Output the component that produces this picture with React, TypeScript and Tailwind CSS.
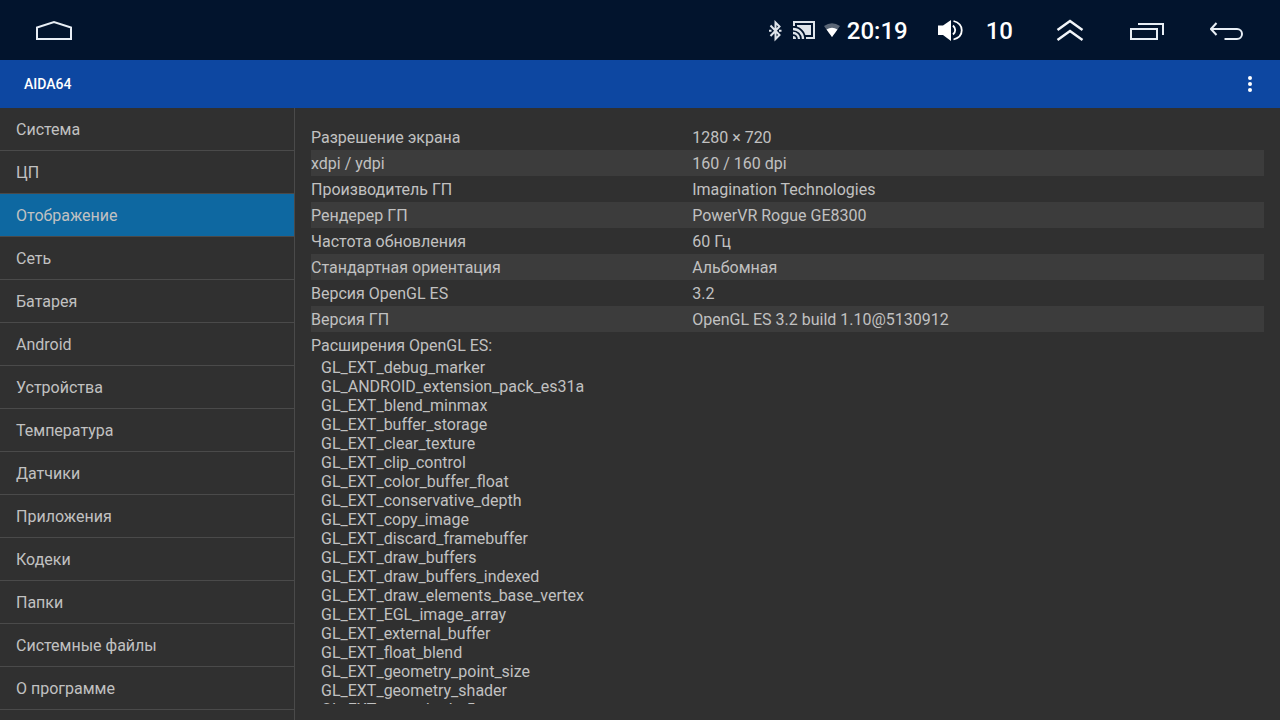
import type { ReactNode } from "react"

const sections = [
  "Система",
  "ЦП",
  "Отображение",
  "Сеть",
  "Батарея",
  "Android",
  "Устройства",
  "Температура",
  "Датчики",
  "Приложения",
  "Кодеки",
  "Папки",
  "Системные файлы",
  "О программе",
]

const rows = [
  ["Разрешение экрана", "1280 × 720"],
  ["xdpi / ydpi", "160 / 160 dpi"],
  ["Производитель ГП", "Imagination Technologies"],
  ["Рендерер ГП", "PowerVR Rogue GE8300"],
  ["Частота обновления", "60 Гц"],
  ["Стандартная ориентация", "Альбомная"],
  ["Версия OpenGL ES", "3.2"],
  ["Версия ГП", "OpenGL ES 3.2 build 1.10@5130912"],
]

const extensions = [
  "GL_EXT_debug_marker",
  "GL_ANDROID_extension_pack_es31a",
  "GL_EXT_blend_minmax",
  "GL_EXT_buffer_storage",
  "GL_EXT_clear_texture",
  "GL_EXT_clip_control",
  "GL_EXT_color_buffer_float",
  "GL_EXT_conservative_depth",
  "GL_EXT_copy_image",
  "GL_EXT_discard_framebuffer",
  "GL_EXT_draw_buffers",
  "GL_EXT_draw_buffers_indexed",
  "GL_EXT_draw_elements_base_vertex",
  "GL_EXT_EGL_image_array",
  "GL_EXT_external_buffer",
  "GL_EXT_float_blend",
  "GL_EXT_geometry_point_size",
  "GL_EXT_geometry_shader",
  "GL_EXT_gpu_shader5",
]

function BarButton({ label, children }: { label: string; children: ReactNode }) {
  return (
    <button type="button" aria-label={label} className="flex shrink-0 items-center">
      {children}
    </button>
  )
}

function StatusBar() {
  return (
    <header className="flex h-[60px] shrink-0 items-center justify-between bg-[#02142d] px-9 text-white">
      <BarButton label="Домой">
        <svg width="36" height="24" viewBox="0 0 36 24" fill="none" stroke="#e8eef5" strokeWidth="2">
          <path d="M1 21V9.500L18 4l17 5.500V21Z" />
        </svg>
      </BarButton>

      <div className="flex items-center">
        <svg width="14" height="24" viewBox="0 0 14 24" fill="none" stroke="#dfe4ea" strokeWidth="2">
          <path d="M2.500 7.500l9 9.500-4 4V4.500l4 4-9 9.500" />
          <path d="M1 12.750h2.500M11 12.750h2.500" />
        </svg>
        <svg className="ml-[10px]" width="24" height="24" viewBox="0 0 24 24" fill="none" stroke="#dfe4ea" strokeWidth="2">
          <path d="M2 8V4h20v16h-8" />
          <path d="M5 7v1.600c4 1.300 7.100 4.400 8.400 8.400H19V7Z" fill="#dfe4ea" stroke="none" />
          <path d="M1 18v3h3a3 3 0 0 0-3-3Z" fill="#dfe4ea" stroke="none" />
          <path d="M1 15a6 6 0 0 1 6 6M1 11a10 10 0 0 1 10 10" strokeWidth="2.300" />
        </svg>
        <svg className="ml-2" width="16" height="24" viewBox="0 0 16 24">
          <path d="M0 8Q8 2.500 16 8L8 19Z" fill="#ffffff" fillOpacity="0.35" />
          <path d="M2.500 11.500Q8 8 13.500 11.500L8 19Z" fill="#ffffff" />
        </svg>
        <span className="ml-[7px] pt-0.5 text-2xl font-medium">20:19</span>

        <div className="ml-[30px] flex items-center gap-[22px]">
          <BarButton label="Громкость">
            <svg width="26" height="24" viewBox="0 0 26 24" fill="none" stroke="#ffffff" strokeWidth="2">
              <path d="M0 7.500h5L13 2v21l-8-6H0Z" fill="#ffffff" stroke="none" />
              <path d="M15 7.500q4.500 4.500 0 9M15.500 3c11 3 11 15.500 0 18.500" strokeWidth="1.800" />
            </svg>
          </BarButton>
          <span className="pt-0.5 text-2xl font-medium">10</span>
        </div>

        <div className="ml-[43px] flex items-center gap-[46px]">
          <BarButton label="Развернуть">
            <svg width="28" height="24" viewBox="0 0 28 24" fill="none" stroke="#f2f5f9" strokeWidth="2.500">
              <path d="M1.500 12L14 3l12.500 9M1.500 22L14 13l12.500 9" />
            </svg>
          </BarButton>
          <BarButton label="Недавние">
            <svg width="34" height="24" viewBox="0 0 34 24" fill="none" stroke="#e8eef5" strokeWidth="2">
              <path d="M1 11h26v10H1ZM8 6h25v11" />
            </svg>
          </BarButton>
          <BarButton label="Назад">
            <svg width="34" height="24" viewBox="0 0 34 24" fill="none" stroke="#e8eef5" strokeWidth="2">
              <path d="M6.500 5L1 11l5.500 6M1 11h26a5 5 0 0 1 0 10H14.500" />
            </svg>
          </BarButton>
        </div>
      </div>
    </header>
  )
}

export default function App() {
  return (
    <div className="flex h-screen flex-col overflow-hidden bg-[#303030] font-['Roboto',sans-serif] text-base text-[#c1c1c1]">
      <StatusBar />

      {/* App bar */}
      <div className="flex h-12 shrink-0 items-center justify-between bg-[#0d47a1] pl-6 pr-7 text-white">
        <h1 className="text-sm font-medium">AIDA64</h1>
        <BarButton label="Меню">
          <svg width="4" height="16" viewBox="0 0 4 16" fill="#ffffff">
            <circle cx="2" cy="2" r="2" />
            <circle cx="2" cy="8" r="2" />
            <circle cx="2" cy="14" r="2" />
          </svg>
        </BarButton>
      </div>

      <div className="flex min-h-0 flex-1">
        {/* Sidebar */}
        <nav className="w-[295px] shrink-0 overflow-hidden border-r border-[#4a4a4a]">
          {sections.map((name) => (
            <a
              key={name}
              href="#"
              aria-current={name === "Отображение" ? "page" : undefined}
              className={
                name === "Отображение"
                  ? "flex h-[43px] items-center border-b border-[#4a4a4a] bg-[#0e68a1] px-4 pt-0.5"
                  : "flex h-[43px] items-center border-b border-[#4a4a4a] px-4 pt-0.5"
              }
            >
              {name}
            </a>
          ))}
        </nav>

        {/* Display details */}
        <main className="flex min-w-0 flex-1 flex-col p-4">
          <div className="min-h-0 flex-1 overflow-hidden">
            <table className="w-full table-fixed border-collapse">
              <tbody>
                {rows.map(([label, value]) => (
                  <tr key={label} className="h-[26px] even:bg-[#3c3c3c]">
                    <th scope="row" className="w-2/5 p-0 pt-0.5 text-left font-normal">
                      {label}
                    </th>
                    <td className="p-0 pt-0.5">{value}</td>
                  </tr>
                ))}
              </tbody>
            </table>
            <h2 className="pt-0.5 leading-6">Расширения OpenGL ES:</h2>
            <ul className="pl-[10px] leading-[19px]">
              {extensions.map((name) => (
                <li key={name}>{name}</li>
              ))}
            </ul>
          </div>
        </main>
      </div>
    </div>
  )
}
